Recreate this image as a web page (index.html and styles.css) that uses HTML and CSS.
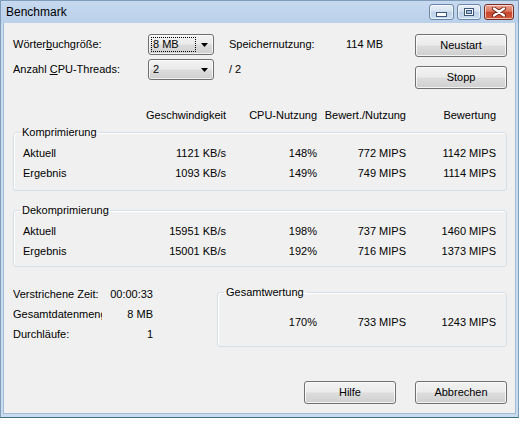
FILE: index.html
```html
<!DOCTYPE html>
<html lang="de">
<head>
<meta charset="utf-8">
<title>Benchmark</title>
<link rel="stylesheet" href="styles.css">
</head>
<body>
<div class="window">
  <div class="titlebar">
    <span class="title">Benchmark</span>
    <div class="caps">
      <span class="cap cap-min"><svg width="11" height="5" viewBox="0 0 11 5"><rect x="0.5" y="0.5" width="10" height="4" fill="#fff" stroke="#3b5678"/></svg></span>
      <span class="cap cap-max"><svg width="10" height="8" viewBox="0 0 10 8"><rect x="0.5" y="0.5" width="9" height="7" fill="#fff" stroke="#3b5678"/><rect x="2.5" y="2.5" width="5" height="3" fill="#a9c1de" stroke="#3b5678"/></svg></span>
      <span class="cap cap-close"><svg width="14" height="10" viewBox="0 0 14 10"><path d="M2 1.5l10 7M12 1.5l-10 7" stroke="#6b2416" stroke-width="4" stroke-linecap="round"/><path d="M2 1.5l10 7M12 1.5l-10 7" stroke="#fff" stroke-width="2.2" stroke-linecap="round"/></svg></span>
    </div>
  </div>
  <div class="client">
    <div class="top">
      <div class="settings">
        <span>Wörter<u>b</u>uchgröße:</span>
        <div class="combo"><span class="combo-text focused">8 MB</span><svg class="arrow" width="7" height="4" viewBox="0 0 7 4"><path d="M0 0h7L3.5 4z"/></svg></div>
        <span class="pad">Speichernutzung:</span>
        <span>114 MB</span>
        <span>Anzahl <u>C</u>PU-Threads:</span>
        <div class="combo"><span class="combo-text">2</span><svg class="arrow" width="7" height="4" viewBox="0 0 7 4"><path d="M0 0h7L3.5 4z"/></svg></div>
        <span class="pad">/ 2</span>
        <span></span>
      </div>
      <div class="side-buttons">
        <button class="btn">Neustart</button>
        <button class="btn">Stopp</button>
      </div>
    </div>

    <div class="cols header">
      <span></span>
      <span class="num">Geschwindigkeit</span>
      <span class="num">CPU-Nutzung</span>
      <span class="num">Bewert./Nutzung</span>
      <span class="num">Bewertung</span>
    </div>

    <fieldset class="group wide first">
      <legend>Komprimierung</legend>
      <div class="cols row">
        <span>Aktuell</span><span class="num">1121 KB/s</span><span class="num">148%</span><span class="num">772 MIPS</span><span class="num">1142 MIPS</span>
      </div>
      <div class="cols row">
        <span>Ergebnis</span><span class="num">1093 KB/s</span><span class="num">149%</span><span class="num">749 MIPS</span><span class="num">1114 MIPS</span>
      </div>
    </fieldset>

    <fieldset class="group wide second">
      <legend>Dekomprimierung</legend>
      <div class="cols row">
        <span>Aktuell</span><span class="num">15951 KB/s</span><span class="num">198%</span><span class="num">737 MIPS</span><span class="num">1460 MIPS</span>
      </div>
      <div class="cols row">
        <span>Ergebnis</span><span class="num">15001 KB/s</span><span class="num">192%</span><span class="num">716 MIPS</span><span class="num">1373 MIPS</span>
      </div>
    </fieldset>

    <div class="bottom">
      <div class="stats">
        <span class="stat-label">Verstrichene Zeit:</span><span class="num">00:00:33</span>
        <span class="stat-label">Gesamtdatenmenge:</span><span class="num">8 MB</span>
        <span class="stat-label">Durchläufe:</span><span class="num">1</span>
      </div>
      <fieldset class="group total">
        <legend>Gesamtwertung</legend>
        <div class="total-row">
          <span class="num">170%</span><span class="num">733 MIPS</span><span class="num">1243 MIPS</span>
        </div>
      </fieldset>
    </div>

    <div class="actions">
      <button class="btn">Hilfe</button>
      <button class="btn">Abbrechen</button>
    </div>
  </div>
</div>
</body>
</html>
```

FILE: styles.css
```css
* { box-sizing: border-box; }

html, body {
  margin: 0;
  padding: 0;
  background: #ffffff;
}

body {
  font-family: "Liberation Sans", Arial, sans-serif;
  font-size: 11px;
  line-height: 13px;
  color: #000;
}

.window {
  width: 519px;
  height: 418px;
  display: flex;
  flex-direction: column;
  background: #c9dbef;
  border: 1px solid #7f9db9;
  border-bottom-color: #3f6e7c;
  padding: 0 2px 3px 2px;
}

.titlebar {
  height: 22px;
  margin: 0 -2px;
  padding: 0 4px 0 5px;
  display: flex;
  align-items: center;
  justify-content: space-between;
  background: linear-gradient(#c6d9ef, #bad0ea);
}

.title {
  font-size: 12px;
  color: #000;
  padding-top: 1px;
}

.caps {
  display: flex;
  gap: 3px;
  align-self: flex-start;
  margin-top: 3px;
}

.cap {
  height: 16px;
  display: flex;
  align-items: center;
  justify-content: center;
  border: 1px solid #6b87a8;
  border-radius: 3px;
  background: linear-gradient(#e9f0f8 0%, #d6e3f2 45%, #bdd1e9 50%, #c9dbef 100%);
  box-shadow: inset 0 0 0 1px rgba(255, 255, 255, 0.6);
}

.cap-min { width: 25px; padding-top: 5px; }
.cap-max { width: 24px; }
.cap-close {
  width: 30px;
  border-color: #7a2e22;
  background: linear-gradient(#eda08e 0%, #dd7a63 45%, #c8452b 50%, #d25b3f 100%);
}

.client {
  flex: 1;
  background: #f0f0f0;
  border: 1px solid #a3bcd6;
  border-top: none;
  padding: 0 8px 0 9px;
  display: flex;
  flex-direction: column;
}

.top {
  margin-top: 11px;
  display: flex;
  justify-content: space-between;
}

.settings {
  display: grid;
  grid-template-columns: 135px 66px 132px 60px;
  grid-auto-rows: 21px;
  row-gap: 4px;
  align-items: center;
}

.settings .pad { padding-left: 15px; }

.combo {
  height: 21px;
  display: flex;
  align-items: center;
  border: 1px solid #707070;
  border-radius: 3px;
  background: linear-gradient(#f2f2f2 0%, #ebebeb 48%, #dddddd 52%, #cfcfcf 100%);
  box-shadow: inset 0 0 0 1px rgba(255, 255, 255, 0.7);
  padding: 0 5px 0 2px;
}

.combo-text {
  flex: 1;
  height: 15px;
  line-height: 13px;
  padding: 0 1px;
  border: 1px solid transparent;
}

.combo-text.focused {
  border: 1px dotted #000;
  margin-right: 5px;
}

.arrow { fill: #000; flex: none; }

.side-buttons {
  display: flex;
  flex-direction: column;
  gap: 9px;
}

.btn {
  width: 92px;
  height: 23px;
  font: inherit;
  color: #000;
  border: 1px solid #707070;
  border-radius: 3px;
  background: linear-gradient(#f2f2f2 0%, #ebebeb 48%, #dddddd 52%, #cfcfcf 100%);
  box-shadow: inset 0 0 0 1px rgba(255, 255, 255, 0.75);
  padding: 0;
}

.cols {
  display: grid;
  grid-template-columns: 123px 80px 91px 89px 90px;
}

.num { text-align: right; white-space: nowrap; }

.header {
  margin-top: 20px;
  padding-left: 10px;
}

.group {
  margin: 0;
  border: 1px solid #d5dfe5;
  border-radius: 3px;
  box-shadow: inset 1px 1px 0 #fff;
  min-width: 0;
}

.group legend {
  line-height: 14px;
  padding: 0 1px;
  margin-left: -2px;
}

.wide {
  width: 494px;
  padding: 4px 10px 7px 9px;
}

.first { margin-top: 3px; }
.second { margin-top: 12px; padding-top: 4px; padding-bottom: 5px; }

.row {
  height: 20px;
  align-items: center;
}

.bottom {
  margin-top: 17px;
  display: flex;
}

.stats {
  width: 204px;
  display: grid;
  grid-template-columns: 89px 51px;
  grid-auto-rows: 20px;
  align-items: center;
  align-content: start;
}

.stat-label {
  overflow: hidden;
  white-space: nowrap;
}

.total {
  width: 290px;
  margin-top: 1px;
  padding: 13px 10px 14px 0;
}

.total legend { margin-left: 6px; padding: 0 2px; }

.total-row {
  display: grid;
  grid-template-columns: 99px 89px 90px;
  height: 20px;
  align-items: center;
}

.actions {
  margin-top: 34px;
  display: flex;
  justify-content: flex-end;
  gap: 19px;
}
```
